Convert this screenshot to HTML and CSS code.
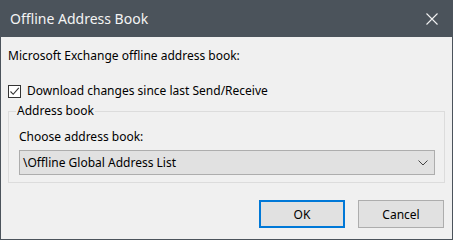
FILE: index.html
```html
<!DOCTYPE html>
<html>
  <head>
    <meta charset="utf-8">
    <title>Offline Address Book</title>
    <link rel="stylesheet" href="styles.css">
  </head>
  <body>
    <div class="dialog">
      <div class="titlebar">
        <span class="title">Offline Address Book</span>
        <svg class="close" width="12" height="12" viewBox="0 0 12 12">
          <path d="M0.5 0.5 L11.5 11.5 M11.5 0.5 L0.5 11.5" stroke="#f2f2f2" stroke-width="1.1" fill="none"/>
        </svg>
      </div>
      <div class="content">
        <p class="intro">Microsoft Exchange offline address book:</p>
        <label class="check-row">
          <span class="check-box">
            <svg width="11" height="11" viewBox="0 0 11 11">
              <path d="M1.5 5.5 L4.2 8.3 L9.8 1.8" stroke="#333" stroke-width="1.1" fill="none"/>
            </svg>
          </span>
          Download changes since last Send/Receive
        </label>
        <fieldset class="group">
          <legend>Address book</legend>
          <p class="field-label">Choose address book:</p>
          <div class="select">
            <span>\Offline Global Address List</span>
            <svg width="10" height="6" viewBox="0 0 10 6">
              <path d="M0.5 0.5 L5 5 L9.5 0.5" stroke="#444" stroke-width="1" fill="none"/>
            </svg>
          </div>
        </fieldset>
        <div class="buttons">
          <button class="btn btn-default">OK</button>
          <button class="btn">Cancel</button>
        </div>
      </div>
    </div>
  </body>
</html>
```

FILE: styles.css
```css
body {
  margin: 0;
  font-family: "Noto Sans", "Open Sans", sans-serif;
  font-size: 12px;
  color: #000;
}

.dialog {
  width: 453px;
  height: 240px;
  box-sizing: border-box;
  border: 1px solid #4b535b;
  border-top: none;
  background-color: #f0f0f0;
}

.titlebar {
  display: flex;
  align-items: center;
  justify-content: space-between;
  height: 37px;
  margin: 0 -1px;
  padding: 0 15px 0 10px;
  background-color: #4b535b;
}

.title {
  color: #f4f4f4;
  font-size: 14px;
  line-height: 20px;
}

.close {
  display: block;
}

.content {
  padding: 0 7px;
}

.intro {
  margin: 11px 0 0;
  line-height: 16px;
}

.check-row {
  display: flex;
  align-items: center;
  gap: 6px;
  margin-top: 19px;
  line-height: 16px;
}

.check-box {
  display: flex;
  align-items: center;
  justify-content: center;
  width: 11px;
  height: 11px;
  border: 1px solid #333;
  background-color: #fff;
}

.group {
  margin: 4px 0 0;
  padding: 0 9px 7px 10px;
  border: 1px solid #dcdcdc;
}

.group legend {
  margin-left: -3px;
  padding: 0 1px;
  line-height: 16px;
}

.field-label {
  margin: 10px 0 0;
  line-height: 16px;
}

.select {
  display: flex;
  align-items: center;
  justify-content: space-between;
  height: 25px;
  box-sizing: border-box;
  margin-top: 5px;
  padding: 0 6px 0 3px;
  border: 1px solid #adadad;
  background-color: #e1e1e1;
}

.buttons {
  display: flex;
  justify-content: flex-end;
  gap: 13px;
  margin-top: 17px;
  padding-right: 1px;
}

.btn {
  width: 86px;
  height: 28px;
  padding: 0;
  font-family: inherit;
  font-size: 12px;
  color: #000;
  border: 1px solid #adadad;
  background-color: #e1e1e1;
}

.btn-default {
  border: 2px solid #0078d7;
}
```
